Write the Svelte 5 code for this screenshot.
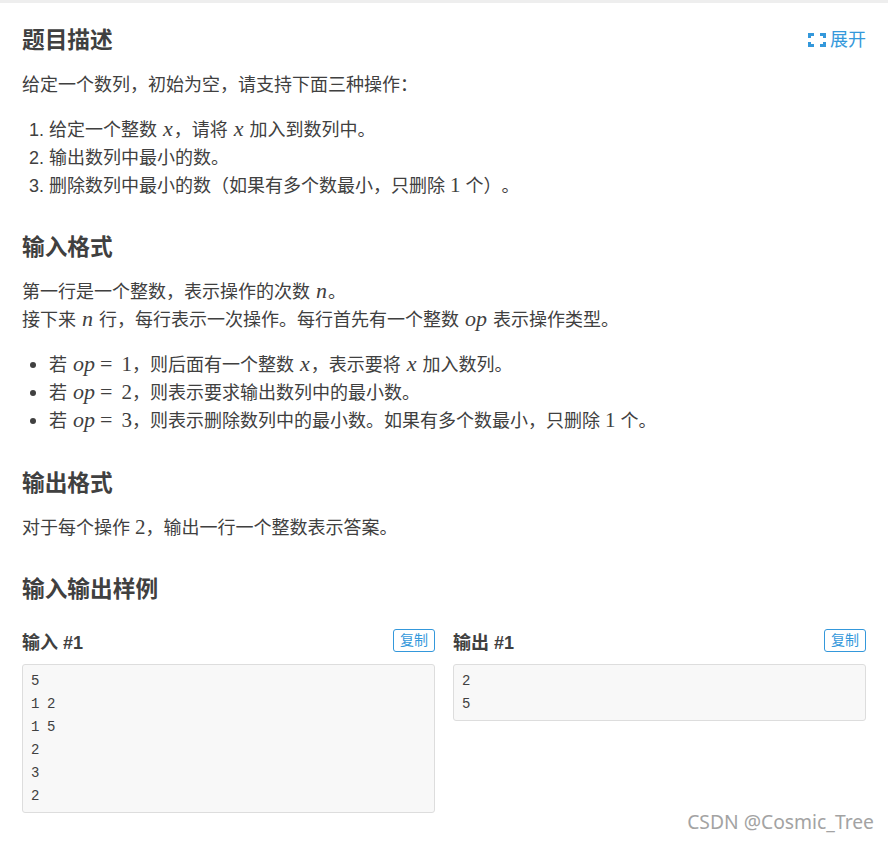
<script lang="ts">
	const ops = [
		{ n: '1', tail: '则后面有一个整数', x: true, rest: '表示要将', rest2: '加入数列。' },
		{ n: '2', tail: '则表示要求输出数列中的最小数。' },
		{ n: '3', tail: '则表示删除数列中的最小数。如果有多个数最小，只删除', one: true }
	];
	const samples = [
		{ title: '输入 #1', lines: ['5', '1 2', '1 5', '2', '3', '2'] },
		{ title: '输出 #1', lines: ['2', '5'] }
	];
</script>

<div class="page">
	<main class="card">
		<section class="first">
			<div class="head">
				<h2>题目描述</h2>
				<button type="button" class="expand">
					<svg width="18" height="14" viewBox="0 0 18 14" aria-hidden="true">
						<path d="M6 1.5H1.5V5M1.5 9V12.5H6M12 1.5H16.5V5M16.5 9V12.5H12" fill="none" stroke="#3498db" stroke-width="3" />
					</svg>
					展开
				</button>
			</div>
			<p>给定一个数列，初始为空，请支持下面三种操作：</p>
			<ol>
				<li>给定一个整数 <i>x</i>，请将 <i>x</i> 加入到数列中。</li>
				<li>输出数列中最小的数。</li>
				<li>删除数列中最小的数（如果有多个数最小，只删除 <span class="num">1</span> 个）。</li>
			</ol>
		</section>

		<section class="format">
			<h2>输入格式</h2>
			<p>第一行是一个整数，表示操作的次数 <i>n</i>。<br />接下来 <i>n</i> 行，每行表示一次操作。每行首先有一个整数 <i>op</i> 表示操作类型。</p>
			<ul>
				{#each ops as op (op.n)}
					<li>
						若 <i>op</i><span class="eq">=</span><span class="num">{op.n}</span>，{op.tail}{#if op.x}{' '}<i>x</i>，{op.rest} <i>x</i> {op.rest2}{/if}{#if op.one}{' '}<span class="num">1</span> 个。{/if}
					</li>
				{/each}
			</ul>
		</section>

		<section class="output">
			<h2>输出格式</h2>
			<p>对于每个操作 <span class="num">2</span>，输出一行一个整数表示答案。</p>
		</section>

		<section class="last">
			<h2>输入输出样例</h2>
			<div class="samples">
				{#each samples as s (s.title)}
					<div class="sample">
						<div class="sample-head">
							<h3>{s.title}</h3>
							<button type="button" class="copy">复制</button>
						</div>
						<pre>{s.lines.join('\n')}</pre>
					</div>
				{/each}
			</div>
		</section>
		<span class="mark">CSDN @Cosmic_Tree</span>
	</main>
</div>

<style>
	:global(body) {
		margin: 0;
		background: #fff;
	}

	.page {
		height: 841px;
		border-top: 3px solid #eee;
		box-sizing: border-box;
		overflow: hidden;
		color: #404040;
		font: 18px/28px 'Liberation Sans', 'Noto Sans CJK SC', sans-serif;
		text-spacing-trim: space-all;
	}

	.card {
		position: relative;
		height: 100%;
		box-sizing: border-box;
		padding: 22px 22px 0;
	}

	section {
		margin-bottom: 32px;
	}

	section.format {
		margin-bottom: 33px;
	}

	section.output {
		margin-bottom: 32px;
	}

	.head {
		display: flex;
		justify-content: space-between;
		align-items: center;
	}

	h2 {
		margin: 0 0 16px;
		font-size: 22.7px;
		line-height: 30px;
		font-weight: 700;
	}

	p {
		margin: 0 0 17px;
	}

	ol,
	ul {
		margin: 0;
		padding-left: 27px;
	}

	ul li {
		position: relative;
		list-style: none;
	}

	ul li::before {
		content: '';
		position: absolute;
		left: -19px;
		top: 11px;
		width: 6px;
		height: 6px;
		border-radius: 50%;
		background: #404040;
	}

	i {
		padding: 0 1px;
		font-family: 'Liberation Serif', serif;
		font-size: 22px;
		line-height: 0;
	}

	.num {
		font-family: 'Liberation Serif', serif;
		font-size: 21px;
		line-height: 0;
	}

	.eq {
		margin: 0 9px 0 4px;
		font-family: 'Liberation Serif', serif;
		font-size: 22px;
		line-height: 0;
	}

	.expand {
		display: flex;
		align-items: center;
		gap: 4px;
		margin: 0 0 16px;
		padding: 0;
		border: 0;
		background: none;
		color: #3498db;
		font: inherit;
	}

	.samples {
		display: grid;
		grid-template-columns: 1fr 1fr;
		gap: 18px;
	}

	.sample-head {
		display: flex;
		justify-content: space-between;
		align-items: flex-end;
		height: 37px;
		margin-bottom: 7px;
	}

	h3 {
		margin: 0;
		font-size: 18px;
		line-height: 28px;
		font-weight: 700;
	}

	.copy {
		box-sizing: border-box;
		height: 23px;
		margin-bottom: 5px;
		padding: 0 6px;
		border: 1px solid #3498db;
		border-radius: 3px;
		background: #fff;
		color: #3498db;
		font: 14px/21px 'Liberation Sans', 'Noto Sans CJK SC', sans-serif;
	}

	pre {
		margin: 0;
		padding: 5px 8px 4px;
		border: 1px solid #ddd;
		border-radius: 3px;
		background: #f8f8f8;
		font: 14px/23px 'Liberation Mono', 'Noto Sans CJK SC', monospace;
		letter-spacing: -0.4px;
	}

	.mark {
		position: absolute;
		right: 14px;
		bottom: 5px;
		color: #a3a3a3;
		font: 19.3px/28px 'Noto Sans', sans-serif;
	}
</style>
